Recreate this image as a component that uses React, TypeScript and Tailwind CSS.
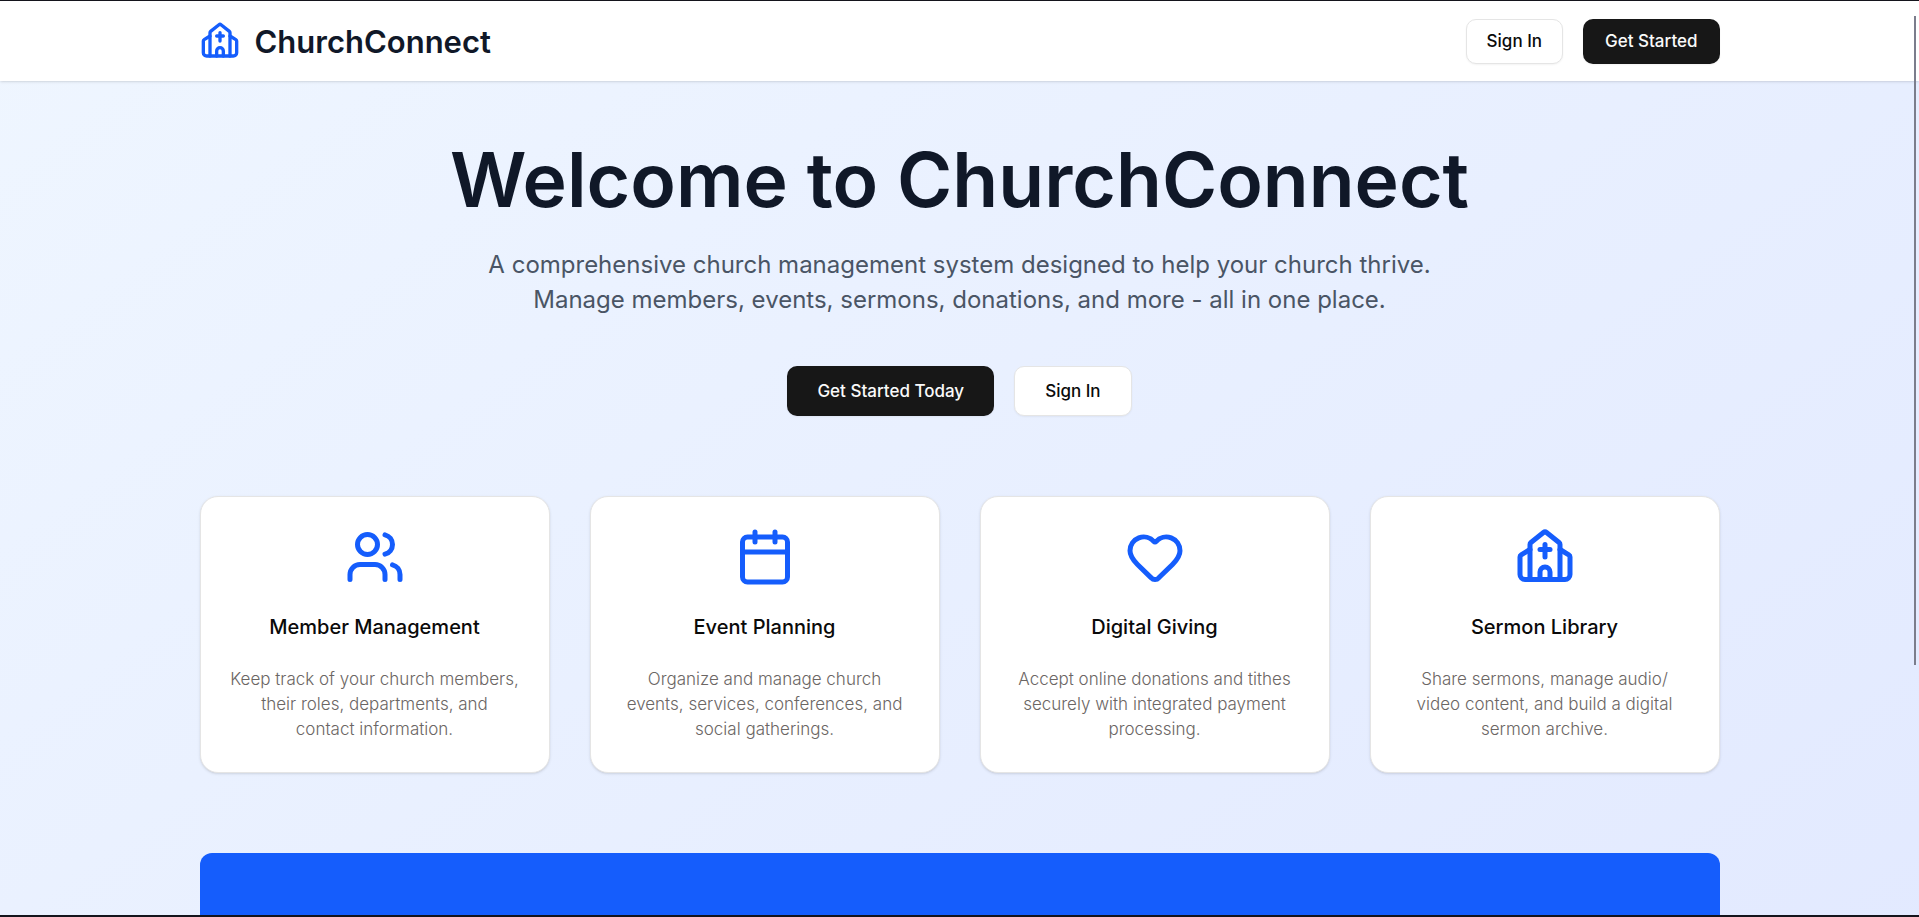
import React, { FC, ReactNode } from 'react';
import { Calendar, Church, Heart, LucideIcon, Users } from 'lucide-react';
import clsx from 'clsx';

interface Feature {
  icon: LucideIcon;
  title: string;
  description: string;
}

const features: Feature[] = [
  {
    icon: Users,
    title: 'Member Management',
    description: 'Keep track of your church members, their roles, departments, and contact information.',
  },
  {
    icon: Calendar,
    title: 'Event Planning',
    description: 'Organize and manage church events, services, conferences, and social gatherings.',
  },
  {
    icon: Heart,
    title: 'Digital Giving',
    description: 'Accept online donations and tithes securely with integrated payment processing.',
  },
  {
    icon: Church,
    title: 'Sermon Library',
    description: 'Share sermons, manage audio/\u200bvideo content, and build a digital sermon archive.',
  },
];

interface ButtonProps {
  variant?: 'primary' | 'outline';
  className?: string;
  children: ReactNode;
}

const Button: FC<ButtonProps> = ({ variant = 'primary', className, children }) => (
  <button
    type="button"
    className={clsx(
      'rounded-[10px] pt-0.5 text-[17px] font-medium whitespace-nowrap shadow-xs',
      variant === 'primary' ? 'bg-[#171717] text-neutral-50' : 'border border-[#e5e5e5] bg-white text-neutral-950',
      className,
    )}
  >
    {children}
  </button>
);

const Header: FC = () => (
  <header className="relative shrink-0 bg-white shadow-sm">
    <div className="mx-auto flex h-20 max-w-[1600px] items-center justify-between px-10">
      <div className="flex items-center gap-[15px]">
        <Church className="size-10 text-blue-600" />
        <span className="pt-0.5 text-[31px] font-semibold text-gray-900">ChurchConnect</span>
      </div>
      <div className="flex items-center gap-5">
        <Button variant="outline" className="h-[45px] px-5">
          Sign In
        </Button>
        <Button className="h-[45px] px-[22px]">Get Started</Button>
      </div>
    </div>
  </header>
);

const FeatureCard: FC<Feature> = ({ icon: Icon, title, description }) => (
  <article className="rounded-[18px] border border-[#e5e5e5] bg-white px-[29px] py-[30px] text-center shadow-sm">
    <Icon className="mx-auto size-[60px] text-blue-600" />
    <h3 className="mt-6 text-xl leading-8 font-medium text-neutral-950">{title}</h3>
    <p className="mt-6 text-[17px] leading-[25px] font-light text-[#6b6664]">{description}</p>
  </article>
);

const App: FC = () => (
  <div className="relative flex h-screen flex-col overflow-hidden border-t border-b-2 border-[#14141c] bg-white font-[Inter,sans-serif]">
    <div className="shrink-0 bg-linear-to-br from-blue-50 to-indigo-100">
      <Header />
      <main className="mx-auto max-w-[1600px] px-10 pt-[61px] pb-20">
        <section className="flex flex-col items-center text-center">
          <h1 className="text-[75px] leading-none font-semibold text-gray-900">Welcome to ChurchConnect</h1>
          <p className="mt-[30px] max-w-[960px] text-2xl leading-[35px] text-gray-600">
            A comprehensive church management system designed to help your church thrive. Manage members, events,
            sermons, donations, and more - all in one place.
          </p>
          <div className="mt-[49px] flex gap-5">
            <Button className="h-[50px] px-[30px]">Get Started Today</Button>
            <Button variant="outline" className="h-[50px] px-[30px]">
              Sign In
            </Button>
          </div>
        </section>
        <section className="mt-20 grid grid-cols-4 gap-10">
          {features.map((feature) => (
            <FeatureCard key={feature.title} {...feature} />
          ))}
        </section>
        <section className="mt-20 rounded-xl bg-blue-600 py-60" />
      </main>
    </div>
    <div className="absolute top-[15px] right-[3px] h-[649px] w-0.5 bg-[#7b7d8c]" />
  </div>
);

export default App;
